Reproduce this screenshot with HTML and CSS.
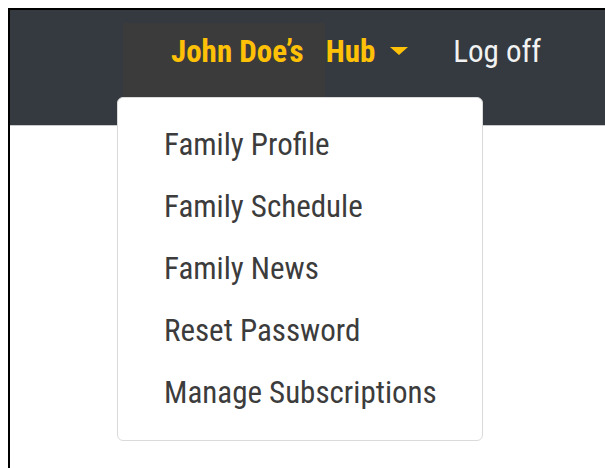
FILE: index.html
```
<!DOCTYPE html>
<html lang="en">
<head>
<meta charset="utf-8">
<title>John Doe’s Hub</title>
<link rel="stylesheet" href="styles.css">
</head>
<body>
<div class="frame">
  <nav class="navbar">
    <div class="hub">
      <a class="hub-toggle" href="#">
        <span class="owner">John Doe’s</span>
        <span class="hub-label">Hub</span>
        <span class="caret"></span>
      </a>
      <ul class="hub-menu">
        <li><a href="#">Family Profile</a></li>
        <li><a href="#">Family Schedule</a></li>
        <li><a href="#">Family News</a></li>
        <li><a href="#">Reset Password</a></li>
        <li><a href="#">Manage Subscriptions</a></li>
      </ul>
    </div>
    <a class="logoff" href="#">Log off</a>
  </nav>
</div>
</body>
</html>
```
FILE: styles.css
```
html, body {
  margin: 0;
  height: 100%;
  background: #fff;
  overflow: hidden;
}

.frame {
  margin: 8px 0 0 8px;
  height: calc(100% - 8px);
  border-top: 2px solid #000;
  border-left: 2px solid #000;
  box-sizing: border-box;
  font-family: "Roboto Condensed", Roboto, sans-serif;
}

/* top bar */
.navbar {
  display: flex;
  align-items: flex-start;
  height: 116px;
  box-sizing: border-box;
  padding: 13px 0 0 113px;
  background: #343a40;
  border-bottom: 1px solid #c9cacc;
}

.hub {
  position: relative;
}

.hub-toggle {
  display: flex;
  align-items: flex-start;
  font-size: 31px;
  line-height: 36px;
  font-weight: 700;
  color: #ffc107;
  text-decoration: none;
}

.owner {
  display: block;
  height: 90px;
  padding: 11px 21px 0 48px;
  background: #3b3b3b;
}

.hub-label {
  padding: 11px 0 0 1px;
}

.caret {
  width: 0;
  height: 0;
  margin: 24px 0 0 15px;
  border-top: 8px solid #ffc107;
  border-left: 9px solid transparent;
  border-right: 9px solid transparent;
}

.logoff {
  margin-left: 45px;
  padding-top: 11px;
  font-size: 31px;
  line-height: 36px;
  color: #f2f2f2;
  text-decoration: none;
}

/* dropdown */
.hub-menu {
  position: absolute;
  top: 74px;
  left: -6px;
  width: 366px;
  box-sizing: border-box;
  margin: 0;
  padding: 16px 0;
  list-style: none;
  background: #fff;
  border: 1px solid #dadada;
  border-radius: 6px;
}

.hub-menu a {
  display: block;
  padding-left: 46px;
  font-size: 31px;
  line-height: 62px;
  color: #3c3c3c;
  text-decoration: none;
}
```
